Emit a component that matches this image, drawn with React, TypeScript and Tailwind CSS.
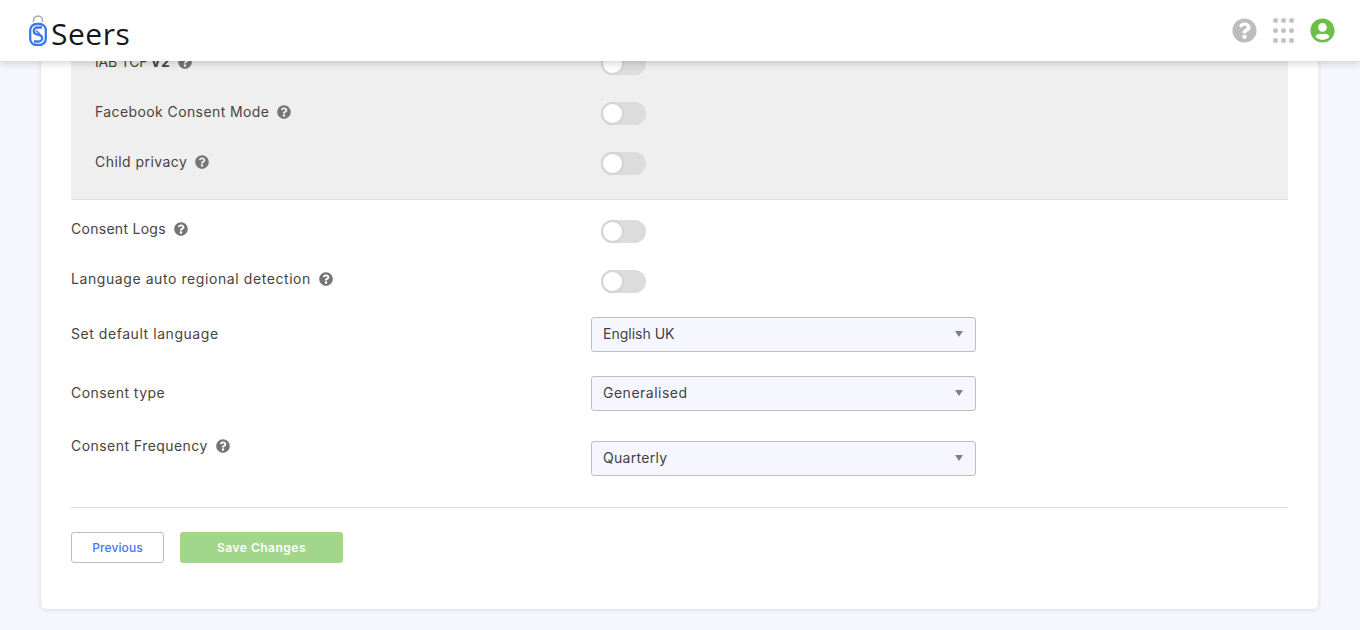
import React from 'react';
import { FaQuestionCircle, FaUserCircle } from 'react-icons/fa';

const font = { fontFamily: 'Inter, sans-serif' };

function Help({ className = '' }: { className?: string }) {
  return <FaQuestionCircle className={`inline-block text-[14px] text-[#757575] ${className}`} />;
}

function Toggle() {
  return (
    <div className="relative h-[23px] w-[45px] shrink-0 rounded-full bg-[#dcdcdc]">
      <div className="absolute left-0 top-0 h-[23px] w-[23px] rounded-full border-2 border-[#d4d4d4] bg-white" />
    </div>
  );
}

function ToggleRow({ label, bold, indent, tracking = 'tracking-[0.45px]' }: { label: string; bold?: string; indent?: boolean; tracking?: string }) {
  return (
    <div className={`flex h-[50px] items-center ${indent ? 'pl-[24px]' : ''}`}>
      <div className={`flex items-center gap-[8px] ${indent ? '-mt-[3px] w-[506px]' : '-mt-[5px] w-[530px]'}`}>
        <span className={`text-[14px] text-[#4a4340] ${tracking}`}>
          {label}
          {bold && <b className="font-bold tracking-normal"> {bold}</b>}
        </span>
        <Help />
      </div>
      <Toggle />
    </div>
  );
}

function SelectRow({
  label,
  value,
  help,
  className = '',
  tracking = 'tracking-[0.45px]',
  valueTracking = 'tracking-[0.3px]',
}: {
  label: string;
  value: string;
  help?: boolean;
  className?: string;
  tracking?: string;
  valueTracking?: string;
}) {
  return (
    <div className={`flex items-center ${className}`}>
      <div className={`flex w-[520px] items-center gap-[8px] ${help ? '-mt-[26px]' : '-mt-[2px]'}`}>
        <span className={`text-[14px] text-[#4a4340] ${tracking}`}>{label}</span>
        {help && <Help />}
      </div>
      <div className="flex h-[35px] w-[385px] items-center justify-between rounded-[3px] border border-[#bdbdc4] bg-[#f6f7fe] pl-[11px] pr-[12px]">
        <span className={`-mt-[2px] text-[14px] text-[#3f3f46] ${valueTracking}`}>{value}</span>
        <span className="-mt-[2px] h-0 w-0 border-x-[4px] border-t-[6px] border-x-transparent border-t-[#808080]" />
      </div>
    </div>
  );
}

function Logo() {
  return (
    <svg width="18" height="31" viewBox="0 0 18 31" fill="none" className="shrink-0">
      <path d="M4.5 7 V5.5 A4.5 4.5 0 0 1 13.5 5.5 V7" stroke="#a8a8a8" strokeWidth="1.5" />
      <path d="M12 9 H7.5 A6.3 6.3 0 0 0 1.2 15.3 V23.5 A6.3 6.3 0 0 0 7 30" stroke="#3b78f0" strokeWidth="2.3" />
      <path d="M6 30 H10.5 A6.3 6.3 0 0 0 16.8 23.7 V15.5 A6.3 6.3 0 0 0 11 9" stroke="#3b78f0" strokeWidth="2.3" />
      <path d="M13 12.5 H8.5 C3.5 12.5 3.5 19 8.5 19.5 C14.5 20 14.5 26.5 9.5 26.5 H5" stroke="#3b78f0" strokeWidth="2.3" />
      <path d="M7 15.5 L11 19" stroke="#3b78f0" strokeWidth="1.4" />
    </svg>
  );
}

function Header() {
  return (
    <div className="absolute inset-x-0 top-0 z-10 flex h-[61px] items-center justify-between bg-white pl-[29px] pr-[25px] shadow-[0_2px_8px_rgba(0,0,0,0.18)]">
      <div className="flex items-center gap-[4px]">
        <Logo />
        <span className="mt-[6px] text-[30px] leading-none tracking-[0.5px] text-[#16161a]" style={{ fontFamily: '"Open Sans", sans-serif' }}>
          Seers
        </span>
      </div>
      <div className="flex items-center">
        <FaQuestionCircle className="text-[25px] text-[#bdbdbd]" />
        <div className="ml-[16px] grid w-[21px] grid-cols-3 gap-x-[3px] gap-y-[5px]">
          {Array.from({ length: 9 }).map((_, i) => (
            <span key={i} className="h-[5px] w-[5px] rounded-full bg-[#c4c4c4]" />
          ))}
        </div>
        <FaUserCircle className="ml-[16px] text-[25px] text-[#6cc04a]" />
      </div>
    </div>
  );
}

export default function App() {
  return (
    <div className="relative h-[630px] overflow-hidden bg-[#f6f7fe]" style={font}>
      <Header />
      <div className="ml-[41px] h-[609px] w-[1277px] rounded-b-[5px] bg-white px-[30px] shadow-[0_1px_5px_rgba(0,0,0,0.12)]">
        <div className="border-b border-[#dedede] bg-[#efefef] pb-[11px] pt-[38px]">
          <ToggleRow indent label="IAB TCF" bold="V2" tracking="tracking-[-0.2px]" />
          <ToggleRow indent label="Facebook Consent Mode" tracking="tracking-[0.4px]" />
          <ToggleRow indent label="Child privacy" />
        </div>
        <div className="pt-[6px]">
          <ToggleRow label="Consent Logs" tracking="tracking-[0.28px]" />
          <ToggleRow label="Language auto regional detection" tracking="tracking-[0.58px]" />
        </div>
        <SelectRow className="mt-[11px]" label="Set default language" value="English UK" tracking="tracking-[0.55px]" valueTracking="tracking-[0px]" />
        <SelectRow className="mt-[24px]" label="Consent type" value="Generalised" valueTracking="tracking-[0.5px]" />
        <SelectRow className="mt-[30px]" label="Consent Frequency" value="Quarterly" help />
        <div className="mt-[31px] border-t border-[#dedede]" />
        <div className="mt-[24px] flex gap-[16px]">
          <button className="h-[31px] w-[93px] rounded-[3px] border border-[#bdbdbd] bg-white text-[12px] font-medium tracking-[0.1px] text-[#4a73f5]">
            Previous
          </button>
          <button className="h-[31px] w-[163px] rounded-[3px] bg-[#a2d78b] text-[12px] font-semibold tracking-[0.5px] text-white">
            Save Changes
          </button>
        </div>
      </div>
    </div>
  );
}
